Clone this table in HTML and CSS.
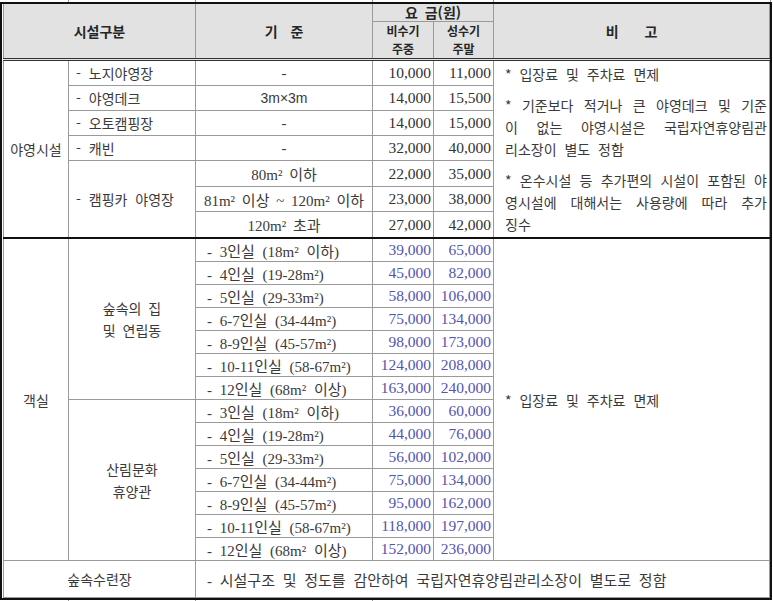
FILE: index.html
```html
<!DOCTYPE html>
<html lang="ko">
<head>
<meta charset="utf-8">
<title>이용요금</title>
<link rel="stylesheet" href="styles.css">
</head>
<body>
<div class="page">
  <div class="strip">
    <span class="s1"></span><span class="s2"></span><span class="s3"></span><span class="s45"></span><span class="s6"></span>
  </div>
  <div class="frame">
    <table class="fees">
      <colgroup>
        <col class="w1"><col class="w2"><col class="w3"><col class="w4"><col class="w5"><col class="w6">
      </colgroup>
      <thead>
        <tr class="h1">
          <th rowspan="2" colspan="2">시설구분</th>
          <th rowspan="2" class="gap1">기 준</th>
          <th colspan="2" class="gap0">요 금(원)</th>
          <th rowspan="2" class="gap2">비 고</th>
        </tr>
        <tr class="h2">
          <th class="sub">비수기<br>주중</th>
          <th class="sub">성수기<br>주말</th>
        </tr>
      </thead>
      <tbody class="camp">
        <tr class="rc">
          <td rowspan="7" class="cat">야영시설</td>
          <td class="item">- 노지야영장</td>
          <td class="ctr">-</td>
          <td class="num">10,000</td>
          <td class="num">11,000</td>
          <td rowspan="7" class="note top">
            <p>* 입장료 및 주차료 면제</p>
            <p><span class="ln j">* 기준보다 적거나 큰 야영데크 및 기준</span><span class="ln j">이 없는 야영시설은 국립자연휴양림관</span><span class="ln">리소장이 별도 정함</span></p>
            <p><span class="ln j">* 온수시설 등 추가편의 시설이 포함된 야</span><span class="ln j">영시설에 대해서는 사용량에 따라 추가</span><span class="ln">징수</span></p>
          </td>
        </tr>
        <tr class="rc"><td class="item">- 야영데크</td><td class="ctr sans">3m×3m</td><td class="num">14,000</td><td class="num">15,500</td></tr>
        <tr class="rc"><td class="item">- 오토캠핑장</td><td class="ctr">-</td><td class="num">14,000</td><td class="num">15,000</td></tr>
        <tr class="rc"><td class="item">- 캐빈</td><td class="ctr">-</td><td class="num">32,000</td><td class="num">40,000</td></tr>
        <tr class="rc2"><td rowspan="3" class="item">- 캠핑카 야영장</td><td class="ctr">80m² 이하</td><td class="num">22,000</td><td class="num">35,000</td></tr>
        <tr class="rc"><td class="ctr">81m² 이상 ~ 120m² 이하</td><td class="num">23,000</td><td class="num">38,000</td></tr>
        <tr class="rc2"><td class="ctr">120m² 초과</td><td class="num">27,000</td><td class="num">42,000</td></tr>
      </tbody>
      <tbody class="rooms">
        <tr class="rr first">
          <td rowspan="14" class="cat">객실</td>
          <td rowspan="7" class="grp">숲속의 집<br>및 연립동</td>
          <td class="room">- 3인실 (18m² 이하)</td>
          <td class="num blue">39,000</td>
          <td class="num blue">65,000</td>
          <td rowspan="14" class="note mid"><p>* 입장료 및 주차료 면제</p></td>
        </tr>
        <tr class="rr"><td class="room">- 4인실 (19-28m²)</td><td class="num blue">45,000</td><td class="num blue">82,000</td></tr>
        <tr class="rr"><td class="room">- 5인실 (29-33m²)</td><td class="num blue">58,000</td><td class="num blue">106,000</td></tr>
        <tr class="rr"><td class="room">- 6-7인실 (34-44m²)</td><td class="num blue">75,000</td><td class="num blue">134,000</td></tr>
        <tr class="rr"><td class="room">- 8-9인실 (45-57m²)</td><td class="num blue">98,000</td><td class="num blue">173,000</td></tr>
        <tr class="rr"><td class="room">- 10-11인실 (58-67m²)</td><td class="num blue">124,000</td><td class="num blue">208,000</td></tr>
        <tr class="rr"><td class="room">- 12인실 (68m² 이상)</td><td class="num blue">163,000</td><td class="num blue">240,000</td></tr>
        <tr class="rr">
          <td rowspan="7" class="grp">산림문화<br>휴양관</td>
          <td class="room">- 3인실 (18m² 이하)</td><td class="num blue">36,000</td><td class="num blue">60,000</td>
        </tr>
        <tr class="rr"><td class="room">- 4인실 (19-28m²)</td><td class="num blue">44,000</td><td class="num blue">76,000</td></tr>
        <tr class="rr"><td class="room">- 5인실 (29-33m²)</td><td class="num blue">56,000</td><td class="num blue">102,000</td></tr>
        <tr class="rr"><td class="room">- 6-7인실 (34-44m²)</td><td class="num blue">75,000</td><td class="num blue">134,000</td></tr>
        <tr class="rr"><td class="room">- 8-9인실 (45-57m²)</td><td class="num blue">95,000</td><td class="num blue">162,000</td></tr>
        <tr class="rr"><td class="room">- 10-11인실 (58-67m²)</td><td class="num blue">118,000</td><td class="num blue">197,000</td></tr>
        <tr class="rr"><td class="room">- 12인실 (68m² 이상)</td><td class="num blue">152,000</td><td class="num blue">236,000</td></tr>
      </tbody>
      <tbody class="hall">
        <tr class="rh">
          <td colspan="2" class="cat">숲속수련장</td>
          <td colspan="4" class="room">- 시설구조 및 정도를 감안하여 국립자연휴양림관리소장이 별도로 정함</td>
        </tr>
      </tbody>
    </table>
  </div>
  <div class="strip">
    <span class="s1"></span><span class="s2"></span><span class="s3"></span>
  </div>
</div>
</body>
</html>
```
FILE: styles.css
```css
html, body {
  margin: 0;
  padding: 0;
  background: #fff;
}
body {
  font-family: "Noto Sans CJK KR", "Noto Sans", sans-serif;
  color: #3a3a3a;
  font-size: 14px;
}
.page {
  width: 773px;
  height: 601px;
  overflow: hidden;
}
.strip {
  display: flex;
  height: 2px;
}
.strip span {
  border-right: 1px solid #999;
  box-sizing: border-box;
  height: 2px;
}
.strip .s1 { width: 69px; }
.strip .s2 { width: 127px; }
.strip .s3 { width: 177px; }
.strip .s45 { width: 121px; }
.strip .s6 { width: 277px; }

.frame {
  width: 772px;
  box-sizing: border-box;
  border: 2px solid #111;
  padding: 0 1px;
}
.fees {
  width: 766px;
  border-collapse: collapse;
  table-layout: fixed;
}
.w1 { width: 65px; }
.w2 { width: 127px; }
.w3 { width: 177px; }
.w4 { width: 61px; }
.w5 { width: 60px; }
.w6 { width: 276px; }

.fees th, .fees td {
  border: 1px solid #9a9a9a;
  padding: 0;
  white-space: nowrap;
}
.fees td { overflow: hidden; }
.fees thead th {
  background: #e2e2e2;
  font-weight: 700;
  color: #262626;
  font-size: 14px;
  border-top: none;
}
.fees thead tr.h1 th { height: 17px; line-height: 17px; }
.fees thead tr.h2 th { height: 36px; }
.fees thead th[rowspan="2"], .fees thead tr.h2 th {
  border-bottom: 3px double #333;
}
.fees th.sub {
  font-size: 12px;
  line-height: 18px;
}
.fees th.gap0 { word-spacing: 3px; }
.fees th.gap1 { word-spacing: 9px; }
.fees th.gap2 { word-spacing: 22px; }

.fees .rc td { height: 24px; }
.fees .rc2 td { height: 25px; }
.fees .rr td { height: 22px; }
.fees .rooms tr.first td { border-top: 2px solid #111; }
.fees .rh td { height: 36px; }

.fees td.cat { text-align: center; }
.fees td.grp {
  text-align: center;
  line-height: 22px;
  white-space: normal;
  word-spacing: 3px;
}
.fees td.item {
  padding-left: 7px;
  word-spacing: 4px;
}
.fees td.room {
  padding-left: 11px;
  word-spacing: 4px;
  font-family: "Liberation Serif", "Noto Sans CJK KR", serif;
  font-size: 15px;
}
.fees td.ctr {
  text-align: center;
  font-family: "Liberation Serif", "Noto Sans CJK KR", serif;
  font-size: 15px;
  word-spacing: 3px;
}
.fees td.ctr.sans {
  font-family: "Liberation Sans", sans-serif;
  font-size: 14px;
}
.fees td.num {
  text-align: right;
  padding-right: 2px;
  font-family: "Liberation Serif", serif;
  font-size: 15.5px;
  color: #333;
}
.fees td.num.blue { color: #5454b0; }

.fees td.note {
  padding: 0 2px 0 11px;
  white-space: normal;
  word-spacing: 4px;
}
.fees td.note.top { vertical-align: top; padding-top: 2px; }
.fees td.note.mid { vertical-align: middle; }
.note p {
  margin: 0 0 9px;
  line-height: 22px;
}
.note p:last-child { margin-bottom: 0; }
.ln { display: block; white-space: nowrap; }
.ln.j { text-align: justify; text-align-last: justify; }
```
